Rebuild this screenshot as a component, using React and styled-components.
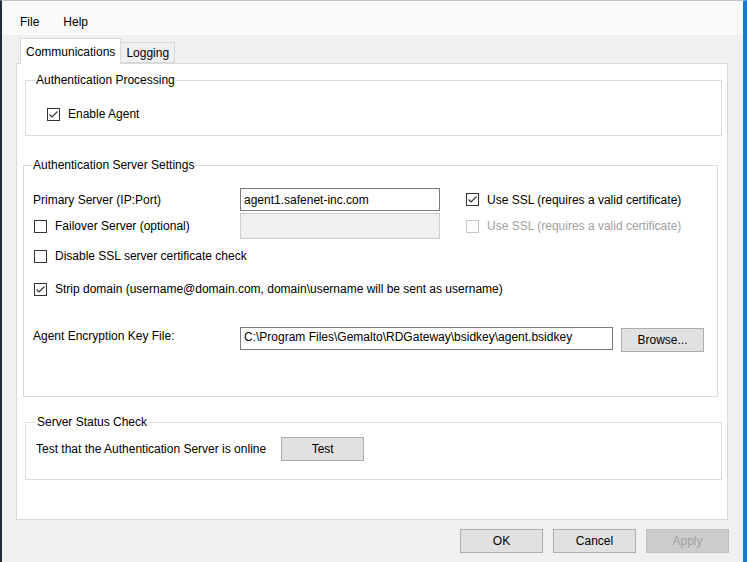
import React from 'react';
import styled, { createGlobalStyle } from 'styled-components';

const GlobalStyle = createGlobalStyle`
  html, body {
    margin: 0;
    padding: 0;
  }
  body {
    font-family: "Liberation Sans", Arial, sans-serif;
    font-size: 12px;
    color: #000;
  }
`;

// Window frame
const Window = styled.div`
  width: 747px;
  height: 562px;
  box-sizing: border-box;
  background: #f0f0f0;
  border-top: 1px solid #c4c4c4;
  border-left: 2px solid #1f2b3a;
  border-right: 4px solid #1a78d0;
  display: flex;
  flex-direction: column;
  overflow: hidden;
`;

const MenuBar = styled.div`
  height: 34px;
  box-sizing: border-box;
  background: #fafafa;
  display: flex;
  gap: 24px;
  padding: 14px 0 0 18px;
  line-height: 14px;
`;

const TabStrip = styled.div`
  height: 28px;
  display: flex;
  align-items: flex-end;
  padding-left: 18px;
`;

const Tab = styled.div`
  position: relative;
  box-sizing: border-box;
  height: ${(p) => (p.$active ? 26 : 21)}px;
  margin-bottom: ${(p) => (p.$active ? -1 : 0)}px;
  padding: ${(p) => (p.$active ? 6 : 3)}px 5px 0;
  line-height: 14px;
  background: ${(p) => (p.$active ? '#fff' : '#f0f0f0')};
  border: 1px solid #d9d9d9;
  border-bottom: ${(p) => (p.$active ? 'none' : '1px solid #d9d9d9')};
  border-left: ${(p) => (p.$first ? '1px solid #d9d9d9' : 'none')};
  z-index: ${(p) => (p.$active ? 1 : 0)};
`;

const Panel = styled.div`
  margin-left: 14px;
  width: 712px;
  height: 457px;
  box-sizing: border-box;
  background: #fff;
  border: 1px solid #d9d9d9;
  padding: 9px 5px 0 7px;
  display: flex;
  flex-direction: column;
`;

// Group boxes
const Group = styled.fieldset`
  margin: ${(p) => p.$mt || 0}px ${(p) => p.$mr || 0}px 0 ${(p) => p.$ml || 0}px;
  padding: 0 0 0 ${(p) => p.$pl}px;
  height: ${(p) => p.$h}px;
  box-sizing: border-box;
  border: 1px solid #dcdcdc;
  min-width: 0;
  display: flex;
  flex-direction: column;
`;

const Legend = styled.legend`
  padding: 0 1px;
  line-height: 14px;
  font-size: 12px;
`;

const Row = styled.div`
  display: flex;
  align-items: ${(p) => p.$align || 'center'};
  margin-top: ${(p) => p.$mt || 0}px;
  margin-left: ${(p) => p.$ml || 0}px;
  height: ${(p) => p.$h || 14}px;
`;

const Text = styled.span`
  line-height: 14px;
  white-space: nowrap;
  width: ${(p) => (p.$w ? `${p.$w}px` : 'auto')};
  margin-top: ${(p) => p.$mt || 0}px;
  flex-shrink: 0;
`;

const TextBox = styled.input`
  box-sizing: border-box;
  width: ${(p) => p.$w}px;
  height: ${(p) => p.$h || 23}px;
  margin: 0;
  padding: 0 3px ${(p) => p.$pb || 0}px;
  font-family: inherit;
  font-size: 12px;
  color: #000;
  background: ${(p) => (p.disabled ? '#f0f0f0' : '#fff')};
  border: 1px solid ${(p) => (p.disabled ? '#cccccc' : '#7a7a7a')};
  outline: none;
  flex-shrink: 0;
`;

const Button = styled.button`
  box-sizing: border-box;
  width: ${(p) => p.$w || 83}px;
  height: 24px;
  margin: ${(p) => p.$mt || 0}px 0 0 ${(p) => p.$ml || 0}px;
  padding: 0;
  font-family: inherit;
  font-size: 12px;
  color: ${(p) => (p.disabled ? '#a3a3a3' : '#000')};
  background: ${(p) => (p.disabled ? '#cccccc' : '#e1e1e1')};
  border: 1px solid ${(p) => (p.disabled ? '#bfbfbf' : '#adadad')};
  flex-shrink: 0;
`;

const CheckWrap = styled.label`
  display: flex;
  align-items: center;
  gap: 8px;
  line-height: 14px;
  white-space: nowrap;
  width: ${(p) => (p.$w ? `${p.$w}px` : 'auto')};
  margin-left: ${(p) => p.$ml || 0}px;
  color: ${(p) => (p.$disabled ? '#a0a0a0' : '#000')};
  flex-shrink: 0;
`;

const Box = styled.span`
  width: 13px;
  height: 13px;
  box-sizing: border-box;
  background: #fff;
  border: 1px solid ${(p) => (p.$disabled ? '#c6c6c6' : '#333')};
  display: flex;
  align-items: center;
  justify-content: center;
  flex-shrink: 0;
`;

const Footer = styled.div`
  display: flex;
  justify-content: flex-end;
  gap: 10px;
  margin-top: 9px;
  padding-right: 14px;
`;

const CheckBox = ({ checked, disabled, children, w, ml }) => (
  <CheckWrap $disabled={disabled} $w={w} $ml={ml}>
    <Box $disabled={disabled}>
      {checked && (
        <svg width="11" height="11" viewBox="0 0 11 11">
          <polyline points="1.5,5.5 4,8 9.5,2.5" fill="none" stroke="#333" strokeWidth="1.2" />
        </svg>
      )}
    </Box>
    {children}
  </CheckWrap>
);

const App = () => {
  return (
    <>
      <GlobalStyle />
      <Window>
        <MenuBar>
          <span>File</span>
          <span>Help</span>
        </MenuBar>
        <TabStrip>
          <Tab $active $first>Communications</Tab>
          <Tab>Logging</Tab>
        </TabStrip>
        <Panel>
          <Group $pl={9} $ml={1} $mr={0} $h={63}>
            <Legend>Authentication Processing</Legend>
            <Row $mt={20} $ml={12}>
              <CheckBox checked>Enable Agent</CheckBox>
            </Row>
          </Group>

          <Group $pl={8} $ml={-1} $mr={4} $mt={22} $h={239}>
            <Legend>Authentication Server Settings</Legend>
            <Row $mt={16} $ml={1} $h={23}>
              <Text $w={207}>Primary Server (IP:Port)</Text>
              <TextBox $w={200} readOnly value="agent1.safenet-inc.com" />
              <CheckBox checked ml={26}>Use SSL (requires a valid certificate)</CheckBox>
            </Row>
            <Row $mt={2} $ml={2} $h={26}>
              <CheckBox w={206}>Failover Server (optional)</CheckBox>
              <TextBox $w={200} $h={26} disabled readOnly value="" />
              <CheckBox disabled ml={26}>Use SSL (requires a valid certificate)</CheckBox>
            </Row>
            <Row $mt={10} $ml={2}>
              <CheckBox>Disable SSL server certificate check</CheckBox>
            </Row>
            <Row $mt={19} $ml={2}>
              <CheckBox checked>
                {'Strip domain (username@domain.com, domain\\username will be sent as username)'}
              </CheckBox>
            </Row>
            <Row $mt={31} $ml={1} $h={25} $align="flex-start">
              <Text $w={207} $mt={2}>Agent Encryption Key File:</Text>
              <TextBox
                $w={373}
                $pb={4}
                readOnly
                value={'C:\\Program Files\\Gemalto\\RDGateway\\bsidkey\\agent.bsidkey'}
              />
              <Button $ml={8} $mt={1}>Browse...</Button>
            </Row>
          </Group>

          <Group $pl={10} $ml={1} $mt={18} $h={65}>
            <Legend>Server Status Check</Legend>
            <Row $mt={8} $h={24}>
              <Text>Test that the Authentication Server is online</Text>
              <Button $ml={15}>Test</Button>
            </Row>
          </Group>
        </Panel>
        <Footer>
          <Button>OK</Button>
          <Button>Cancel</Button>
          <Button disabled>Apply</Button>
        </Footer>
      </Window>
    </>
  );
};

export default App;
